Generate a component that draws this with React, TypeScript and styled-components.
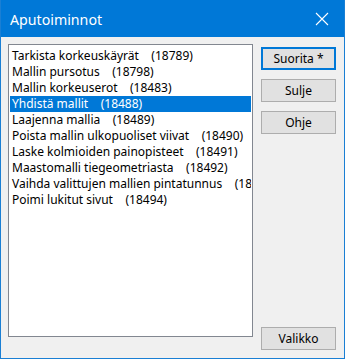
import React from "react";
import styled, { createGlobalStyle } from "styled-components";

const FONT = `"Segoe UI", "Noto Sans", "Liberation Sans", sans-serif`;

const Global = createGlobalStyle`
  html, body { margin: 0; padding: 0; background: #f0f0f0; }
  body { font-family: ${FONT}; }
  * { box-sizing: border-box; }
`;

const Window = styled.div`
  width: 345px;
  height: 359px;
  border: 1px solid #1a7fd4;
  border-top: none;
  background: #f0f0f0;
  display: flex;
  flex-direction: column;
`;

const TitleBar = styled.div`
  height: 37px;
  background: #0078d7;
  display: flex;
  align-items: center;
  justify-content: space-between;
  padding: 0 0 0 9px;
  color: #fff;
  flex: none;
`;

const Title = styled.span`
  font-size: 14.2px;
  font-family: ${FONT};
  margin-top: 1px;
`;

const CloseBox = styled.div`
  width: 46px;
  height: 37px;
  display: flex;
  align-items: center;
  justify-content: center;
  margin-right: -1px;
`;

const Body = styled.div`
  flex: 1;
  display: flex;
  padding: 0 7px 0 7px;
  gap: 8px;
`;

const ListBox = styled.div`
  flex: none;
  width: 245px;
  margin-top: 7px;
  margin-bottom: 21px;
  background: #fff;
  border: 1px solid #828790;
  padding: 3px 1px 0 1px;
  overflow: hidden;
  display: flex;
  flex-direction: column;
`;

const Item = styled.div<{ $selected?: boolean }>`
  height: 16px;
  line-height: 16px;
  padding-left: 2px;
  white-space: pre;
  overflow: hidden;
  font-size: 12px;
  font-family: ${FONT};
  color: ${(p) => (p.$selected ? "#fff" : "#000")};
  background: ${(p) => (p.$selected ? "#0078d7" : "transparent")};
`;

const ButtonColumn = styled.div`
  width: 75px;
  display: flex;
  flex-direction: column;
  gap: 9px;
  padding-top: 10px;
  padding-bottom: 8px;
`;

const Spacer = styled.div`
  flex: 1;
`;

const Button = styled.button<{ $default?: boolean }>`
  height: 23px;
  width: 75px;
  background: #e1e1e1;
  border: 1px solid ${(p) => (p.$default ? "#0078d7" : "#adadad")};
  box-shadow: ${(p) => (p.$default ? "inset 0 0 0 1px #0078d7" : "none")};
  font-size: 12px;
  font-family: ${FONT};
  color: #000;
  padding: 0;
  margin: 0;
  border-radius: 0;
`;

const items = [
  "Tarkista korkeuskäyrät    (18789)",
  "Mallin pursotus    (18798)",
  "Mallin korkeuserot    (18483)",
  "Yhdistä mallit    (18488)",
  "Laajenna mallia    (18489)",
  "Poista mallin ulkopuoliset viivat    (18490)",
  "Laske kolmioiden painopisteet    (18491)",
  "Maastomalli tiegeometriasta    (18492)",
  "Vaihda valittujen mallien pintatunnus    (18493)",
  "Poimi lukitut sivut    (18494)",
];

export default function App() {
  return (
    <>
      <Global />
      <Window>
        <TitleBar>
          <Title>Aputoiminnot</Title>
          <CloseBox>
            <svg width="14" height="14" viewBox="0 0 14 14">
              <path d="M1 1 L13 13 M13 1 L1 13" stroke="#fff" strokeWidth="1.1" fill="none" />
            </svg>
          </CloseBox>
        </TitleBar>
        <Body>
          <ListBox>
            {items.map((t, i) => (
              <Item key={i} $selected={i === 3}>
                {t}
              </Item>
            ))}
          </ListBox>
          <ButtonColumn>
            <Button $default>Suorita *</Button>
            <Button>Sulje</Button>
            <Button>Ohje</Button>
            <Spacer />
            <Button>Valikko</Button>
          </ButtonColumn>
        </Body>
      </Window>
    </>
  );
}
